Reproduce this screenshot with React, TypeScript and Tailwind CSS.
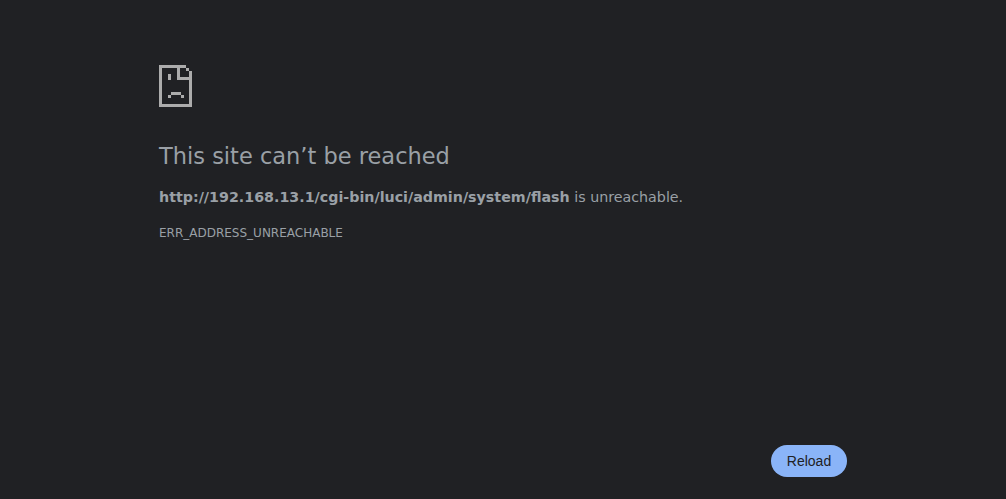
export default function App() {
  return (
    <div className="min-h-[499px] bg-[#202124] px-[159px] pt-[65px] font-['DejaVu_Sans',sans-serif] text-[#9aa0a6]">
      <svg width="33" height="42" viewBox="0 0 33 42" shapeRendering="crispEdges" fill="#acacac">
        <path d="M0 0h27v3H0zM0 3h3v36H0zM0 39h33v3H0zM30 6h3v33h-3zM27 3h3v3h-3zM18 3h3v12h-3zM21 12h9v3h-9zM9 9h3v6H9zM12 27h10v3H12zM9 30h3v3H9zM22 30h3v3h-3z" />
      </svg>
      <h1 className="mt-[34px] text-[22.5px] leading-[30px] whitespace-nowrap">This site can’t be reached</h1>
      <p className="mt-[14px] text-[14.25px] leading-[24px] whitespace-nowrap">
        <strong>http://192.168.13.1/cgi-bin/luci/admin/system/flash</strong> is unreachable.
      </p>
      <div className="mt-[12px] text-[12px] leading-[24px]">ERR_ADDRESS_UNREACHABLE</div>
      <div className="mt-[200px] flex justify-end">
        <button className="h-8 w-[76px] rounded-full bg-[#8ab4f8] font-['Liberation_Sans',sans-serif] text-[14px] text-[#202124]">Reload</button>
      </div>
    </div>
  );
}
